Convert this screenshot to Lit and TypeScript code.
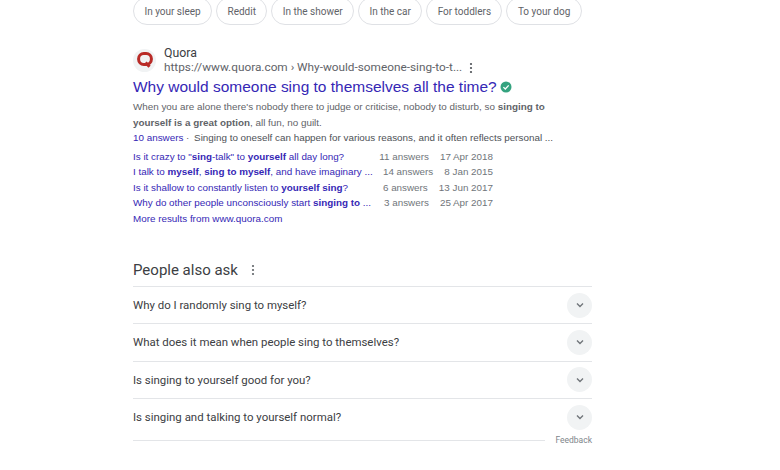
import { LitElement, html, css } from "lit";
import { customElement } from "lit/decorators.js";

const chips = ["In your sleep", "Reddit", "In the shower", "In the car", "For toddlers", "To your dog"];
const rows = [
  [html`Is it crazy to "<b>sing</b>-talk" to <b>yourself</b> all day long?`, "11 answers", "17 Apr 2018"],
  [html`I talk to <b>myself</b>, <b>sing to myself</b>, and have imaginary ...`, "14 answers", "8 Jan 2015"],
  [html`Is it shallow to constantly listen to <b>yourself sing</b>?`, "6 answers", "13 Jun 2017"],
  [html`Why do other people unconsciously start <b>singing to</b> ...`, "3 answers", "25 Apr 2017"],
];
const questions = [
  "Why do I randomly sing to myself?",
  "What does it mean when people sing to themselves?",
  "Is singing to yourself good for you?",
  "Is singing and talking to yourself normal?",
];
const dots = html`<svg viewBox="0 0 4 12" width="4" height="12"><circle cx="2" cy="2" r="1.1"/><circle cx="2" cy="6" r="1.1"/><circle cx="2" cy="10" r="1.1"/></svg>`;

@customElement("app-root")
export class AppRoot extends LitElement {
  static styles = css`
    :host { display: block; width: 780px; height: 470px; overflow: hidden; background: #fff; font-family: "Liberation Sans", Arial, sans-serif; }
    .col { width: 459px; margin-left: 133px; }
    .chips { display: flex; gap: 4px; margin-top: -3px; }
    .chip { height: 26px; padding: 0 10.42px; border: 1px solid #dfe1e5; border-radius: 14px; font: 10px/27px Roboto, sans-serif; color: #5f6368; white-space: nowrap; }
    .source { display: flex; gap: 7px; margin-top: 19px; height: 32px; align-items: center; }
    .fav { width: 23px; height: 23px; border-radius: 50%; background: #f1f3f4; display: flex; align-items: center; justify-content: center; }
    .names { align-self: flex-start; padding-top: 2px; font-family: Roboto, sans-serif; color: #5f6368; margin-left: 1px; }
    .name { font-size: 12.3px; line-height: 15px; color: #3c4043; }
    .url { display: flex; align-items: center; font-size: 11.8px; line-height: 13px; white-space: nowrap; }
    .url svg { fill: #4d5156; margin-left: 7px; }
    .title { display: flex; align-items: center; gap: 3px; font-size: 15.47px; line-height: 20px; color: #3527b5; margin-top: 1px; white-space: nowrap; }
    .snip { font-size: 9.85px; line-height: 15.5px; color: #5f6368; margin-top: 2px; white-space: nowrap; }
    .link { color: #3527b5; }
    .dark { color: #4d5156; margin-left: 2px; }
    .list { margin-top: 3px; font-size: 9.85px; line-height: 15.5px; width: 360px; }
    .row { display: flex; white-space: nowrap; color: #70757a; }
    .row .q { flex: 1; color: #3527b5; }
    .row .a { margin-right: 11px; }
    .more { color: #3527b5; }
    .paa { display: flex; align-items: center; gap: 13px; margin-top: 31px; height: 26px; font: 15px/26px Roboto, sans-serif; color: #3c4043; }
    .paa svg { fill: #5f6368; }
    .qs { margin-top: 3px; }
    .q-item { display: flex; align-items: center; justify-content: space-between; height: 36.3px; border-top: 1px solid #e3e5e8; font: 11.45px Roboto, sans-serif; color: #3c4043; }
    .circle { width: 25px; height: 25px; border-radius: 50%; background: #f1f3f4; display: flex; align-items: center; justify-content: center; }
    .foot { display: flex; align-items: center; gap: 10px; font: 8.5px Roboto, sans-serif; color: #80868b; margin-top: 0; }
    .foot i { flex: 1; border-top: 1px solid #e3e5e8; }
    b { font-weight: 700; }
  `;

  render() {
    return html`<div class="col">
      <div class="chips">${chips.map((c) => html`<div class="chip">${c}</div>`)}</div>
      <div class="source">
        <div class="fav"><svg viewBox="0 0 18 18" width="18" height="18"><rect x="2.6" y="2.6" width="12.8" height="10.8" rx="5.2" fill="none" stroke="#b92b27" stroke-width="3"/><path d="M9.5 11.5 13.5 15.8" fill="none" stroke="#b92b27" stroke-width="3"/></svg></div>
        <div class="names">
          <div class="name">Quora</div>
          <div class="url">https://www.quora.com › Why-would-someone-sing-to-t...${dots}</div>
        </div>
      </div>
      <div class="title">Why would someone sing to themselves all the time?
        <svg viewBox="0 0 12 12" width="12" height="12"><circle cx="6" cy="6" r="5.5" fill="#34a37f"/><path d="M3.4 6.1 5.3 8 8.7 4.4" fill="none" stroke="#fff" stroke-width="1.3"/></svg>
      </div>
      <div class="snip">When you are alone there's nobody there to judge or criticise, nobody to disturb, so <b>singing to<br>yourself is a great option</b>, all fun, no guilt.<br>
        <span class="link">10 answers</span> · <span class="dark">Singing to oneself can happen for various reasons, and it often reflects personal ...</span></div>
      <div class="list">
        ${rows.map((r) => html`<div class="row"><span class="q">${r[0]}</span><span class="a">${r[1]}</span><span>${r[2]}</span></div>`)}
        <div class="more">More results from www.quora.com</div>
      </div>
      <div class="paa">People also ask ${dots}</div>
      <div class="qs">
        ${questions.map((q) => html`<div class="q-item">${q}<div class="circle"><svg viewBox="0 0 12 12" width="12" height="12"><path d="M3 4.5 6 7.5 9 4.5" fill="none" stroke="#70757a" stroke-width="1.4"/></svg></div></div>`)}
      </div>
      <div class="foot"><i></i>Feedback</div>
    </div>`;
  }
}
